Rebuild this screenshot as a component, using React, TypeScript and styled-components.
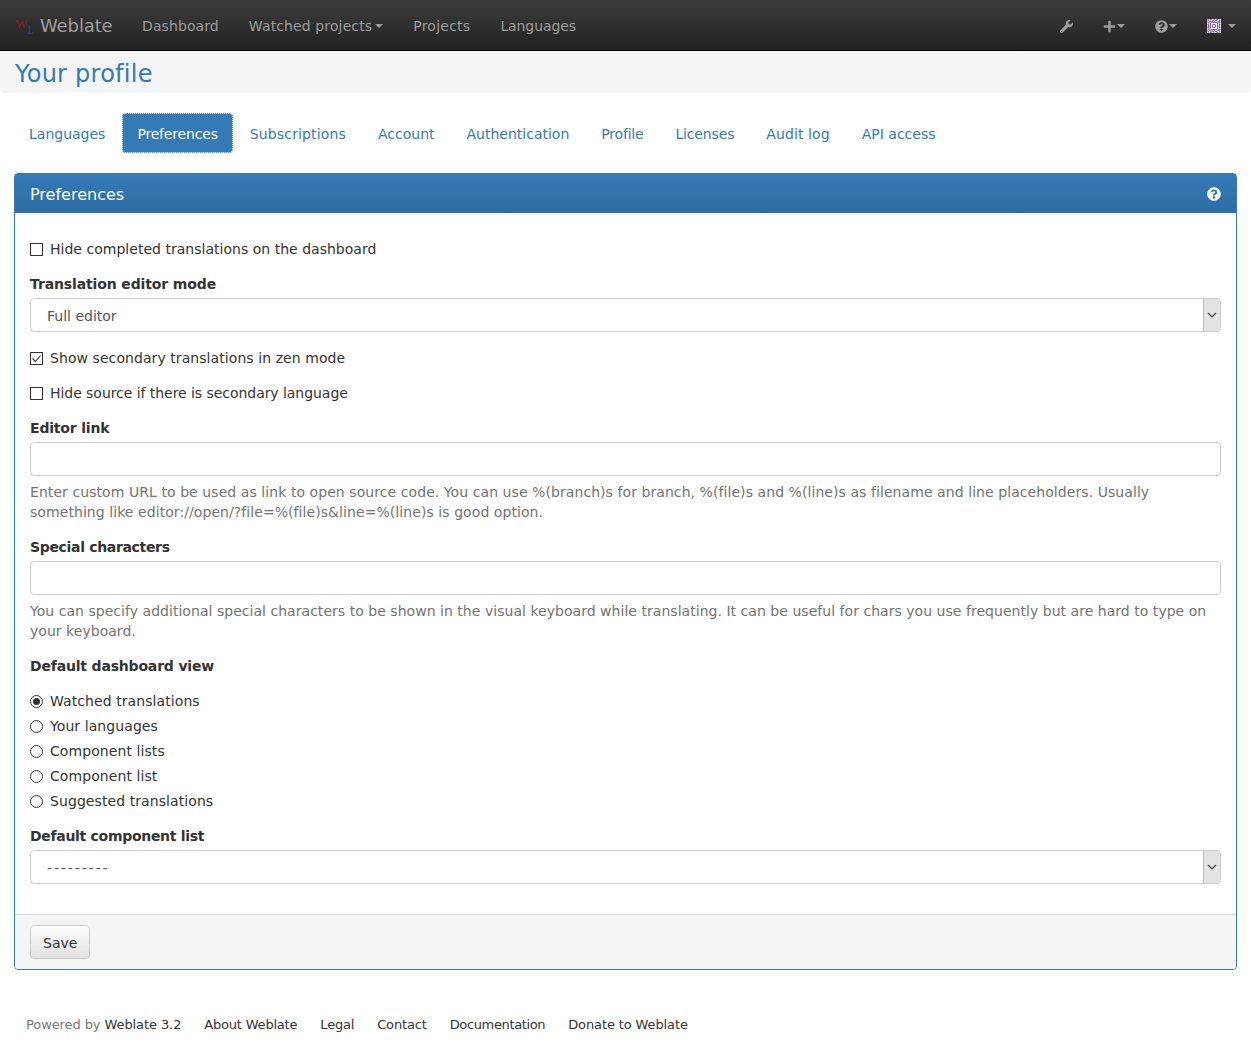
import React from 'react';
import styled, { createGlobalStyle } from 'styled-components';
import { FaWrench, FaPlus, FaQuestionCircle } from 'react-icons/fa';

const GlobalStyle = createGlobalStyle`
  html, body {
    margin: 0;
    padding: 0;
    background: #fff;
    color: #333;
    font-family: 'DejaVu Sans', Verdana, sans-serif;
    font-size: 14px;
    line-height: 20px;
  }
  * {
    box-sizing: border-box;
  }
`;

const Navbar = styled.nav`
  display: flex;
  align-items: center;
  height: 51px;
  padding: 2px 15px 0;
  background: linear-gradient(to bottom, #3c3c3c 0, #222 100%);
  border-bottom: 1px solid #080808;
`;

const Brand = styled.a`
  display: flex;
  align-items: center;
  gap: 7px;
  width: 112px;
  font-size: 18px;
  letter-spacing: -0.12px;
  color: #9d9d9d;
`;

const Logo = styled.span`
  position: relative;
  display: block;
  width: 18px;
  height: 20px;
  letter-spacing: 0;
  font-family: 'Liberation Serif', serif;
`;

const LogoW = styled.span`
  position: absolute;
  left: 0;
  top: 0;
  font-size: 13px;
  line-height: 16px;
  color: #8a1c1c;
`;

const LogoL = styled.span`
  position: absolute;
  left: 12.5px;
  top: 7px;
  font-size: 12px;
  line-height: 14px;
  font-style: italic;
  color: #1d4482;
`;

const NavItem = styled.a<{ $spacing?: number }>`
  display: flex;
  align-items: center;
  padding: 0 15px;
  color: #9d9d9d;
  white-space: nowrap;
  letter-spacing: ${(p) => p.$spacing ?? 0}px;
`;

const Caret = styled.span`
  display: inline-block;
  width: 0;
  height: 0;
  margin-left: 3px;
  letter-spacing: 0;
  border-top: 4px solid #9d9d9d;
  border-left: 4px solid transparent;
  border-right: 4px solid transparent;
`;

const IconCaret = styled(Caret)`
  margin-left: 1px;
`;

const NavRight = styled.div`
  display: flex;
  align-items: center;
  gap: 30px;
  margin-left: auto;
`;

const IconItem = styled.a`
  display: flex;
  align-items: center;
  color: #9d9d9d;
  font-size: 13px;
`;

const Avatar = styled.svg`
  display: block;
  width: 14px;
  height: 14px;
  margin-right: 6px;
`;

const Breadcrumb = styled.div`
  height: 42px;
  padding: 0 15px;
  background: #f5f5f5;
  border-radius: 0 0 4px 4px;
  font-size: 24px;
  line-height: 47px;
  letter-spacing: 0.25px;
  color: #337ab7;
`;

const Pills = styled.ul`
  display: flex;
  gap: 2px;
  margin: 20px 14px;
  padding: 0;
  list-style: none;
`;

const Pill = styled.li<{ $active?: boolean; $spacing: number }>`
  height: 40px;
  padding: 11px 15px 9px;
  border-radius: 4px;
  letter-spacing: ${(p) => p.$spacing}px;
  color: ${(p) => (p.$active ? '#fff' : '#337ab7')};
  background: ${(p) => (p.$active ? '#337ab7' : 'transparent')};
  outline: ${(p) => (p.$active ? '1px dotted #fff' : 'none')};
  outline-offset: -1px;
`;

const Panel = styled.section`
  margin: 0 14px;
  border: 1px solid #337ab7;
  border-radius: 4px;
`;

const PanelHeading = styled.header`
  display: flex;
  align-items: center;
  justify-content: space-between;
  height: 39px;
  padding: 2px 15px 0;
  background: linear-gradient(to bottom, #337ab7 0, #2e6da4 100%);
  color: #fff;
  font-size: 16px;
`;

const HelpIcon = styled(FaQuestionCircle)`
  display: block;
  width: 14px;
  height: 14px;
  margin-top: -2px;
`;

const PanelBody = styled.div`
  padding: 15px;
`;

const FormGroup = styled.div`
  margin-bottom: 15px;
`;

const Label = styled.label<{ $spacing: number }>`
  display: block;
  height: 20px;
  line-height: 22px;
  margin-bottom: 5px;
  font-weight: 700;
  letter-spacing: ${(p) => p.$spacing}px;
  color: #333;
`;

const CheckRow = styled.label<{ $spacing: number }>`
  display: flex;
  align-items: center;
  gap: 7px;
  height: 20px;
  padding-top: 2px;
  margin: 10px 0;
  letter-spacing: ${(p) => p.$spacing}px;
`;

const CheckBox = styled.span`
  display: flex;
  align-items: center;
  justify-content: center;
  width: 13px;
  height: 13px;
  border: 1px solid #333;
  background: #fff;
`;

const CheckMark = styled.svg`
  display: block;
  width: 11px;
  height: 11px;
`;

const RadioList = styled.div`
  display: flex;
  flex-direction: column;
  gap: 5px;
  margin: 15px 0 10px;
`;

const RadioRow = styled.label`
  display: flex;
  align-items: center;
  gap: 7px;
  height: 20px;
  padding-top: 2px;
  letter-spacing: 0.08px;
`;

const RadioCircle = styled.span<{ $on?: boolean }>`
  display: flex;
  align-items: center;
  justify-content: center;
  width: 13px;
  height: 13px;
  border: 1px solid #333;
  border-radius: 50%;
  &::after {
    content: '';
    display: ${(p) => (p.$on ? 'block' : 'none')};
    width: 7px;
    height: 7px;
    border-radius: 50%;
    background: #333;
  }
`;

const SelectWrap = styled.div`
  position: relative;
`;

const Select = styled.select<{ $spacing?: number }>`
  display: block;
  width: 100%;
  height: 34px;
  padding: 8px 20px 6px 16px;
  appearance: none;
  font-family: inherit;
  font-size: 14px;
  letter-spacing: ${(p) => p.$spacing ?? 0}px;
  color: #555;
  background: #fff;
  border: 1px solid #ccc;
  border-radius: 4px;
`;

const SelectArrow = styled.span`
  position: absolute;
  top: 1px;
  right: 1px;
  display: flex;
  align-items: center;
  justify-content: center;
  width: 17px;
  height: 32px;
  background: #e3e3e3;
  border-left: 1px solid #bbb;
  border-radius: 0 3px 3px 0;
  pointer-events: none;
`;

const Input = styled.input`
  display: block;
  width: 100%;
  height: 34px;
  padding: 6px 12px;
  font-family: inherit;
  font-size: 14px;
  color: #555;
  background: #fff;
  border: 1px solid #ccc;
  border-radius: 4px;
`;

const HelpBlock = styled.p<{ $spacing: number }>`
  height: 41px;
  margin: 5px 0 -1px;
  padding-top: 1px;
  letter-spacing: ${(p) => p.$spacing}px;
  color: #737373;
`;

const PanelFooter = styled.footer`
  padding: 10px 15px;
  background: #f5f5f5;
  border-top: 1px solid #ddd;
  border-radius: 0 0 3px 3px;
`;

const Button = styled.button`
  display: block;
  height: 34px;
  padding: 7px 12px 5px;
  font-family: inherit;
  font-size: 14px;
  color: #333;
  background: linear-gradient(to bottom, #fff 0, #e0e0e0 100%);
  border: 1px solid #ccc;
  border-radius: 4px;
`;

const PageFooter = styled.footer`
  display: flex;
  gap: 23px;
  margin-top: 45px;
  padding: 0 26px;
  font-size: 13px;
  color: #333;
`;

const FooterLink = styled.span<{ $spacing: number }>`
  letter-spacing: ${(p) => p.$spacing}px;
`;

const Muted = styled.span`
  color: #777;
`;

const Chevron = () => (
  <svg width="10" height="6" viewBox="0 0 10 6">
    <path d="M1 1 L5 5 L9 1" fill="none" stroke="#444" strokeWidth="1.2" />
  </svg>
);

// identicon, 0 white, 1 light, 2 dark
const cells = [
  '01121011012110',
  '12011220221021',
  '10221102011220',
  '12102222220121',
  '01120000002110',
  '12020122102021',
  '02120200202120',
  '02120200202120',
  '12020122102021',
  '01120000002110',
  '12102222220121',
  '10221102011220',
  '12011220221021',
  '01121011012110',
];
const cellColors: Record<string, string> = { '1': '#c4a8e0', '2': '#8a5cb4' };

const tabs: [string, number][] = [
  ['Languages', 0],
  ['Preferences', -0.18],
  ['Subscriptions', 0.15],
  ['Account', 0],
  ['Authentication', 0],
  ['Profile', -0.2],
  ['Licenses', -0.15],
  ['Audit log', 0.1],
  ['API access', 0],
];
const radios = ['Watched translations', 'Your languages', 'Component lists', 'Component list', 'Suggested translations'];
const footerLinks: [string, number][] = [
  ['About Weblate', -0.2],
  ['Legal', -0.2],
  ['Contact', -0.15],
  ['Documentation', -0.36],
  ['Donate to Weblate', -0.12],
];

const Check: React.FC<{ checked?: boolean; label: string; spacing: number }> = ({ checked, label, spacing }) => (
  <CheckRow $spacing={spacing}>
    <CheckBox>
      {checked && (
        <CheckMark viewBox="0 0 11 11">
          <path d="M1.5 5.5 L4.5 8.5 L9.5 2.5" fill="none" stroke="#333" strokeWidth="1.1" />
        </CheckMark>
      )}
    </CheckBox>
    {label}
  </CheckRow>
);

export default function App() {
  return (
    <>
      <GlobalStyle />
      <Navbar>
        <Brand>
          <Logo>
            <LogoW>W</LogoW>
            <LogoL>L</LogoL>
          </Logo>
          Weblate
        </Brand>
        <NavItem $spacing={0.1}>Dashboard</NavItem>
        <NavItem $spacing={0.12}>
          Watched projects
          <Caret />
        </NavItem>
        <NavItem $spacing={0.25}>Projects</NavItem>
        <NavItem $spacing={-0.1}>Languages</NavItem>
        <NavRight>
          <IconItem>
            <FaWrench />
          </IconItem>
          <IconItem>
            <FaPlus />
            <IconCaret />
          </IconItem>
          <IconItem>
            <FaQuestionCircle />
            <IconCaret />
          </IconItem>
          <IconItem>
            <Avatar viewBox="0 0 14 14" shapeRendering="crispEdges">
              <rect width="14" height="14" fill="#fff" />
              {cells.map((row, y) =>
                row.split('').map((c, x) =>
                  c !== '0' ? <rect key={`${x}-${y}`} x={x} y={y} width="1" height="1" fill={cellColors[c]} /> : null,
                ),
              )}
            </Avatar>
            <IconCaret />
          </IconItem>
        </NavRight>
      </Navbar>
      <Breadcrumb>Your profile</Breadcrumb>
      <Pills>
        {tabs.map(([t, spacing]) => (
          <Pill key={t} $active={t === 'Preferences'} $spacing={spacing}>
            {t}
          </Pill>
        ))}
      </Pills>
      <Panel>
        <PanelHeading>
          Preferences
          <HelpIcon />
        </PanelHeading>
        <PanelBody>
          <FormGroup>
            <Check spacing={0.02} label="Hide completed translations on the dashboard" />
          </FormGroup>
          <FormGroup>
            <Label $spacing={-0.13}>Translation editor mode</Label>
            <SelectWrap>
              <Select defaultValue="full">
                <option value="full">Full editor</option>
              </Select>
              <SelectArrow>
                <Chevron />
              </SelectArrow>
            </SelectWrap>
          </FormGroup>
          <FormGroup>
            <Check checked spacing={0.07} label="Show secondary translations in zen mode" />
          </FormGroup>
          <FormGroup>
            <Check spacing={-0.05} label="Hide source if there is secondary language" />
          </FormGroup>
          <FormGroup>
            <Label $spacing={-0.18}>Editor link</Label>
            <Input />
            <HelpBlock $spacing={0.07}>
              Enter custom URL to be used as link to open source code. You can use %(branch)s for branch, %(file)s and
              %(line)s as filename and line placeholders. Usually something like editor://open/?file=%(file)s&line=%(line)s
              is good option.
            </HelpBlock>
          </FormGroup>
          <FormGroup>
            <Label $spacing={-0.33}>Special characters</Label>
            <Input />
            <HelpBlock $spacing={0.035}>
              You can specify additional special characters to be shown in the visual keyboard while translating. It can be
              useful for chars you use frequently but are hard to type on your keyboard.
            </HelpBlock>
          </FormGroup>
          <FormGroup>
            <Label $spacing={-0.18}>Default dashboard view</Label>
            <RadioList>
              {radios.map((r, i) => (
                <RadioRow key={r}>
                  <RadioCircle $on={i === 0} />
                  {r}
                </RadioRow>
              ))}
            </RadioList>
          </FormGroup>
          <FormGroup>
            <Label $spacing={-0.3}>Default component list</Label>
            <SelectWrap>
              <Select defaultValue="none" $spacing={1.9}>
                <option value="none">---------</option>
              </Select>
              <SelectArrow>
                <Chevron />
              </SelectArrow>
            </SelectWrap>
          </FormGroup>
        </PanelBody>
        <PanelFooter>
          <Button>Save</Button>
        </PanelFooter>
      </Panel>
      <PageFooter>
        <FooterLink $spacing={-0.09}>
          <Muted>Powered by</Muted> Weblate 3.2
        </FooterLink>
        {footerLinks.map(([l, spacing]) => (
          <FooterLink key={l} $spacing={spacing}>
            {l}
          </FooterLink>
        ))}
      </PageFooter>
    </>
  );
}
